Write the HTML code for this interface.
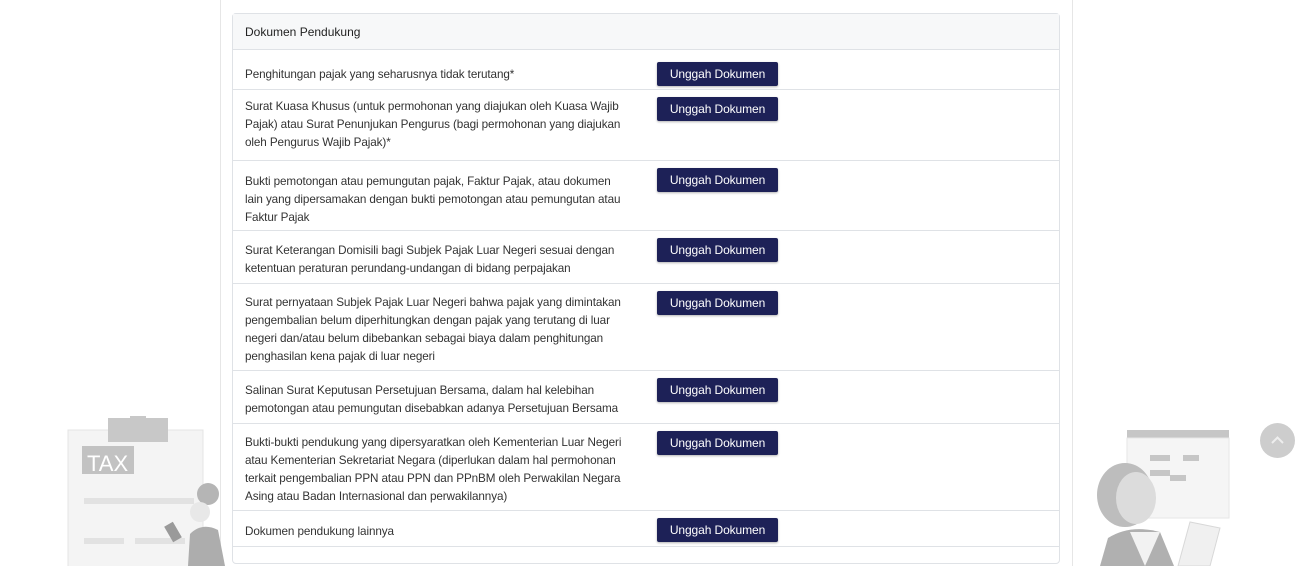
<!DOCTYPE html>
<html style="height:566px;overflow:hidden"><head><meta charset="utf-8"><style>
*{box-sizing:border-box;margin:0;padding:0}
body{width:1297px;height:566px;overflow:hidden;background:#fff;font-family:"Liberation Sans",sans-serif;color:#333;position:relative}
.outer{position:absolute;left:220px;top:-5px;width:853px;height:571px;border:1px solid #e6e6e6;border-bottom:none;background:#fff}
.card{position:absolute;left:232px;top:13px;width:828px;height:551px;border:1px solid #dfe2e6;border-radius:4px;background:#fff}
.hdr{height:36px;background:#f7f8f9;border-bottom:1px solid #dfe2e6;font-size:12px;padding:11px 0 0 12px;color:#222}
.row{position:relative;border-bottom:1px solid #dfe2e6;font-size:11.7px;line-height:18px;color:#333;padding:8px 0 0 12px;letter-spacing:-0.1px}
.btn{position:absolute;left:424px;top:7px;width:121px;height:24px;background:#1d2157;color:#fff;border-radius:2px;font-size:12px;text-align:center;line-height:24px;box-shadow:0 1px 2px rgba(0,0,0,.3)}
</style></head><body>
<div class="outer"></div>
<svg style="position:absolute;left:60px;top:410px" width="165" height="156">
<rect x="8" y="20" width="135" height="150" fill="#f4f4f4" stroke="#e4e4e4"/>
<rect x="48" y="8" width="60" height="24" fill="#c8c8c8"/><rect x="70" y="6" width="16" height="8" fill="#c8c8c8"/>
<rect x="22" y="36" width="52" height="28" fill="#c2c2c2"/><text x="27" y="61" font-family="Liberation Sans" font-size="22" fill="#fff">TAX</text>
<rect x="24" y="88" width="110" height="6" fill="#e2e2e2"/><rect x="24" y="128" width="40" height="6" fill="#e2e2e2"/><rect x="75" y="128" width="50" height="6" fill="#e2e2e2"/>
<rect x="24" y="160" width="110" height="6" fill="#e2e2e2"/>
<circle cx="148" cy="84" r="11" fill="#b5b5b5"/><circle cx="140" cy="102" r="10" fill="#e8e8e8"/>
<path d="M128 156 L130 124 Q142 112 158 120 L165 156 Z" fill="#adadad"/>
<rect x="108" y="113" width="10" height="18" fill="#9a9a9a" transform="rotate(-30 113 122)"/>
</svg>
<svg style="position:absolute;left:1070px;top:420px" width="170" height="146">
<rect x="57" y="10" width="102" height="8" fill="#c6c6c6"/><rect x="57" y="18" width="102" height="80" fill="#f5f5f5" stroke="#e6e6e6"/>
<rect x="80" y="35" width="20" height="6" fill="#c6c6c6"/><rect x="113" y="35" width="16" height="6" fill="#c6c6c6"/><rect x="80" y="50" width="20" height="6" fill="#c6c6c6"/><rect x="100" y="55" width="16" height="6" fill="#c6c6c6"/>
<ellipse cx="55" cy="75" rx="28" ry="32" fill="#bdbdbd"/><ellipse cx="66" cy="78" rx="20" ry="26" fill="#dcdcdc"/>
<path d="M30 146 L38 118 Q60 104 90 112 L104 146 Z" fill="#b0b0b0"/><path d="M60 112 L75 146 L90 112 Z" fill="#f2f2f2"/>
<path d="M108 146 L120 102 L150 108 L140 146 Z" fill="#f0f0f0" stroke="#d8d8d8"/>
</svg>
<div style="position:absolute;left:1260px;top:423px;width:35px;height:35px;border-radius:50%;background:#cdcdcd"><svg width="35" height="35"><path d="M12 20 L17.5 14.5 L23 20" stroke="#eee" stroke-width="2" fill="none"/></svg></div>
<div class="card">
<div class="hdr">Dokumen Pendukung</div>
<div class="row" style="height:40px;padding-top:16px">Penghitungan pajak yang seharusnya tidak terutang*<div class="btn" style="top:12px">Unggah Dokumen</div></div>
<div class="row" style="height:71px">Surat Kuasa Khusus (untuk permohonan yang diajukan oleh Kuasa Wajib<br>Pajak) atau Surat Penunjukan Pengurus (bagi permohonan yang diajukan<br>oleh Pengurus Wajib Pajak)*<div class="btn">Unggah Dokumen</div></div>
<div class="row" style="height:70px;padding-top:12px">Bukti pemotongan atau pemungutan pajak, Faktur Pajak, atau dokumen<br>lain yang dipersamakan dengan bukti pemotongan atau pemungutan atau<br>Faktur Pajak<div class="btn">Unggah Dokumen</div></div>
<div class="row" style="height:53px;padding-top:11px">Surat Keterangan Domisili bagi Subjek Pajak Luar Negeri sesuai dengan<br>ketentuan peraturan perundang-undangan di bidang perpajakan<div class="btn">Unggah Dokumen</div></div>
<div class="row" style="height:87px;padding-top:10px">Surat pernyataan Subjek Pajak Luar Negeri bahwa pajak yang dimintakan<br>pengembalian belum diperhitungkan dengan pajak yang terutang di luar<br>negeri dan/atau belum dibebankan sebagai biaya dalam penghitungan<br>penghasilan kena pajak di luar negeri<div class="btn">Unggah Dokumen</div></div>
<div class="row" style="height:53px;padding-top:11px">Salinan Surat Keputusan Persetujuan Bersama, dalam hal kelebihan<br>pemotongan atau pemungutan disebabkan adanya Persetujuan Bersama<div class="btn">Unggah Dokumen</div></div>
<div class="row" style="height:87px;padding-top:10px">Bukti-bukti pendukung yang dipersyaratkan oleh Kementerian Luar Negeri<br>atau Kementerian Sekretariat Negara (diperlukan dalam hal permohonan<br>terkait pengembalian PPN atau PPN dan PPnBM oleh Perwakilan Negara<br>Asing atau Badan Internasional dan perwakilannya)<div class="btn">Unggah Dokumen</div></div>
<div class="row" style="height:36px;padding-top:12px">Dokumen pendukung lainnya<div class="btn">Unggah Dokumen</div></div>
</div>
</body></html>
